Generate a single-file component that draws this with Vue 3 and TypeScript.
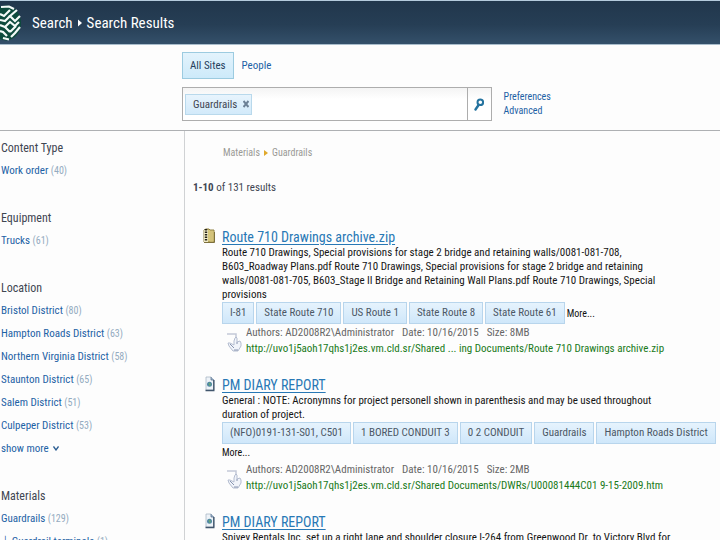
<script setup lang="ts">
import { ref } from 'vue'

interface Refiner {
  name: string
  count: number
}

interface RefinerGroup {
  title: string
  items: Refiner[]
  more?: boolean
}

interface Result {
  id: number
  kind: 'zip' | 'doc'
  title: string
  lines: string[]
  tags: string[]
  size: string
  url: string
}

const query = ref('')

const groups: RefinerGroup[] = [
  { title: 'Content Type', items: [{ name: 'Work order', count: 40 }] },
  { title: 'Equipment', items: [{ name: 'Trucks', count: 61 }] },
  {
    title: 'Location',
    items: [
      { name: 'Bristol District', count: 80 },
      { name: 'Hampton Roads District', count: 63 },
      { name: 'Northern Virginia District', count: 58 },
      { name: 'Staunton District', count: 65 },
      { name: 'Salem District', count: 51 },
      { name: 'Culpeper District', count: 53 },
    ],
    more: true,
  },
  {
    title: 'Materials',
    items: [
      { name: 'Guardrails', count: 129 },
      { name: '└ Guardrail terminals', count: 1 },
    ],
  },
]

const results: Result[] = [
  {
    id: 1,
    kind: 'zip',
    title: 'Route 710 Drawings archive.zip',
    lines: [
      'Route 710 Drawings, Special provisions for stage 2 bridge and retaining walls/0081-081-708,',
      'B603_Roadway Plans.pdf Route 710 Drawings, Special provisions for stage 2 bridge and retaining',
      'walls/0081-081-705, B603_Stage II Bridge and Retaining Wall Plans.pdf Route 710 Drawings, Special',
      'provisions',
    ],
    tags: ['I-81', 'State Route 710', 'US Route 1', 'State Route 8', 'State Route 61'],
    size: '8MB',
    url: 'http://uvo1j5aoh17qhs1j2es.vm.cld.sr/Shared ... ing Documents/Route 710 Drawings archive.zip',
  },
  {
    id: 2,
    kind: 'doc',
    title: 'PM DIARY REPORT',
    lines: [
      'General : NOTE: Acronymns for project personell shown in parenthesis and may be used throughout',
      'duration of project.',
    ],
    tags: ['(NFO)0191-131-S01, C501', '1 BORED CONDUIT 3', '0 2 CONDUIT', 'Guardrails', 'Hampton Roads District'],
    size: '2MB',
    url: 'http://uvo1j5aoh17qhs1j2es.vm.cld.sr/Shared Documents/DWRs/U00081444C01 9-15-2009.htm',
  },
  {
    id: 3,
    kind: 'doc',
    title: 'PM DIARY REPORT',
    lines: ['Spivey Rentals Inc. set up a right lane and shoulder closure I-264 from Greenwood Dr. to Victory Blvd for'],
    tags: [],
    size: '',
    url: '',
  },
]
</script>

<template>
  <div class="page">
    <header class="topbar">
      <svg class="logo" viewBox="0 0 22 36" aria-hidden="true">
        <ellipse cx="6" cy="18" rx="15" ry="17.500" fill="#0d4a3c" />
        <g fill="none" stroke="#f4faf8" stroke-width="2.200">
          <path d="M1 2L9 1.500L14 4M10 5L4 11L0 9M17 5L10 11L15 16L20 11" />
          <path d="M10 11L5 16L0 15M19 17L15 21L10 17L5 22L0 20" />
          <path d="M10 27L5 22M10 27L16 21M0 26L3 27L7 31M20 22L15 28L11 32M3 33L9 34.500" />
        </g>
      </svg>
      <nav class="trail">
        <a href="#search">Search</a>
        <svg class="trail-arrow" viewBox="0 0 5 9" aria-hidden="true"><path d="M0 0L5 4.500L0 9Z" fill="#fff" /></svg>
        <span>Search Results</span>
      </nav>
    </header>

    <section class="search">
      <nav class="scopes">
        <a class="scope active" href="#all">All Sites</a>
        <a class="scope" href="#people">People</a>
      </nav>
      <form class="search-row" @submit.prevent>
        <div class="box">
          <span class="chip">
            Guardrails
            <button class="remove" type="button" aria-label="Remove">
              <svg viewBox="0 0 6 8" aria-hidden="true"><path d="M0.500 1L5.500 7M5.500 1L0.500 7" stroke="#6d8196" stroke-width="2" /></svg>
            </button>
          </span>
          <input v-model="query" class="field" type="text" aria-label="Search" />
          <button class="go" type="submit" aria-label="Go">
            <svg viewBox="0 0 10 13" aria-hidden="true">
              <circle cx="6.300" cy="4.300" r="2.800" fill="none" stroke="#24739f" stroke-width="2" />
              <path d="M4.600 7L1.500 11.500" stroke="#24739f" stroke-width="2.400" stroke-linecap="round" />
            </svg>
          </button>
        </div>
        <div class="options">
          <a href="#preferences">Preferences</a>
          <a href="#advanced">Advanced</a>
        </div>
      </form>
    </section>

    <div class="body">
      <aside class="side">
        <section v-for="g in groups" :key="g.title" class="group">
          <h2>{{ g.title }}</h2>
          <ul>
            <li v-for="i in g.items" :key="i.name">
              <a href="#refine">{{ i.name }}</a> <span class="count">({{ i.count }})</span>
            </li>
          </ul>
          <button v-if="g.more" class="show-more" type="button">
            show more
            <svg viewBox="0 0 6 5" aria-hidden="true"><path d="M0.500 0.500L3 4L5.500 0.500" fill="none" stroke="#2d5f93" stroke-width="1.300" /></svg>
          </button>
        </section>
      </aside>

      <main class="main">
        <nav class="path">
          <span>Materials</span>
          <svg viewBox="0 0 4 6" aria-hidden="true"><path d="M0 0L4 3L0 6Z" fill="#e0a92c" /></svg>
          <span>Guardrails</span>
        </nav>
        <p class="total"><strong>1-10</strong> of 131 results</p>

        <article v-for="r in results" :key="r.id" class="result">
          <svg v-if="r.kind === 'zip'" class="file" viewBox="0 0 12 16" aria-hidden="true">
            <path d="M1 2L3 1H6L7 2H11V14H1Z" fill="#d9c87a" stroke="#8f8042" />
            <path d="M7 3H10.500V13.500H7Z" fill="#d3c27a" />
            <path d="M1 2H5V14H1Z" fill="#efe9c5" />
            <path d="M3 1V13" stroke="#26241a" stroke-width="2.400" stroke-dasharray="1.500 1" />
            <path d="M1 14.500H11.500V4" fill="none" stroke="#7d703d" />
          </svg>
          <svg v-else class="file" viewBox="0 0 12 16" aria-hidden="true">
            <path d="M3 1H8L11 4V14H3Z" fill="#eef3f8" stroke="#a9b7c5" stroke-width="0.800" />
            <path d="M8 1V4H11" fill="#9db3ca" stroke="#5f7792" stroke-width="0.800" />
            <circle cx="6.500" cy="8.200" r="2.500" fill="#4e87a4" />
            <path d="M5.500 7.500L7 6.500L8 9L6.500 10Z" fill="#69a577" />
            <path d="M2.500 14.500H10.800V4" fill="none" stroke="#41566d" stroke-width="1.400" />
          </svg>
          <div class="content">
            <h3><a href="#result">{{ r.title }}</a></h3>
            <p class="summary"><span v-for="l in r.lines" :key="l">{{ l }}</span></p>
            <div v-if="r.tags.length" class="tags">
              <button v-for="t in r.tags" :key="t" class="tag" type="button">{{ t }}</button>
              <a class="more" href="#more">More...</a>
            </div>
            <div v-if="r.url" class="details">
              <svg class="hand" viewBox="0 0 16 20" aria-hidden="true">
                <path d="M1 2H10V9" fill="none" stroke="#c3c9d8" stroke-width="1.500" />
                <path d="M9 6L10 5L11 6V10L14 9L15 11V14L12 19H7L3 14L2 11L4 11L8 13V9Z" fill="#f1f4fa" stroke="#b4bdd0" />
                <path d="M11 10V12M4 12L8 16M8 18H12" fill="none" stroke="#8794b0" />
              </svg>
              <div class="info">
                <p class="meta"><span>Authors: AD2008R2\Administrator</span><span>Date: 10/16/2015</span><span>Size: {{ r.size }}</span></p>
                <a class="url" href="#result">{{ r.url }}</a>
              </div>
            </div>
          </div>
        </article>
      </main>
    </div>
  </div>
</template>

<style>
body {
  overflow: hidden;
}
</style>

<style scoped>
.page {
  height: 100vh;
  overflow: hidden;
  display: flex;
  flex-direction: column;
  background: #fdfdfd;
  color: #3f4652;
  font: 11px/14px "Roboto Condensed", Lato, "Liberation Sans", sans-serif;
}
h2, h3, p, ul {
  margin: 0;
  padding: 0;
  font-weight: 400;
  list-style: none;
}
a {
  color: #1d62a5;
  text-decoration: none;
}
button, input {
  font: inherit;
  border: 0;
  padding: 0;
  background: none;
}
.topbar {
  box-sizing: border-box;
  flex: none;
  height: 45px;
  display: flex;
  align-items: center;
  gap: 10px;
  border-top: 1px solid #b4cbdc;
  border-bottom: 1px solid #a9bdcc;
  background: linear-gradient(#21374c, #263e55 55%, #34506a);
}
.logo {
  width: 22px;
  height: 36px;
}
.trail {
  display: flex;
  align-items: center;
  gap: 5px;
  color: #fff;
  font-size: 15px;
  line-height: 20px;
}
.trail a {
  color: #fff;
}
.trail-arrow {
  width: 4px;
  height: 8px;
}
.search {
  box-sizing: border-box;
  flex: none;
  height: 86px;
  padding: 7px 0 0 182px;
  border-bottom: 1px solid #aeb0b3;
}
.scopes {
  display: flex;
  align-items: center;
  gap: 8px;
}
.scope.active {
  padding: 5px 7px;
  border: 1px solid #9ccbe0;
  background: linear-gradient(#e3f3fc, #cdeafa);
  color: #26405c;
}
.scope {
  line-height: 15px;
}
.search-row {
  display: flex;
  align-items: center;
  gap: 12px;
  padding-top: 8px;
}
.box {
  box-sizing: border-box;
  display: flex;
  align-items: center;
  width: 43vw;
  height: 34px;
  border: 1px solid #adadad;
  background: linear-gradient(#f4f4f4, #fff 35%);
}
.chip {
  display: flex;
  align-items: center;
  gap: 6px;
  margin-left: 2px;
  padding: 2px 2px 2px 7px;
  border: 1px solid #b9d9ec;
  background: linear-gradient(#e8f4fd, #d2eafa);
  line-height: 15px;
}
.remove svg {
  display: block;
  width: 6px;
  height: 8px;
}
.field {
  flex: 1;
  min-width: 0;
  height: 22px;
  outline: 0;
}
.go {
  display: grid;
  place-items: center;
  width: 24px;
  height: 32px;
  border-left: 1px solid #adadad;
}
.go svg {
  width: 10px;
  height: 13px;
}
.options {
  display: grid;
  font-size: 10px;
}
.body {
  flex: 1;
  min-height: 0;
  display: flex;
}
.side {
  box-sizing: border-box;
  flex: none;
  width: 185px;
  padding: 8px 0 0 1px;
  border-right: 1px solid #d0d2d4;
}
.group {
  margin-bottom: 29px;
}
.group h2 {
  font-size: 12px;
  line-height: 18px;
}
.group li {
  height: 23px;
  line-height: 28px;
}
.count {
  color: #94abc0;
  font-size: 10px;
}
.show-more {
  display: flex;
  align-items: center;
  gap: 4px;
  height: 23px;
  padding-top: 4px;
  color: #1d62a5;
}
.show-more svg {
  width: 6px;
  height: 5px;
}
.main {
  flex: 1;
  min-width: 0;
  padding: 15px 0 0 8px;
}
.path {
  display: flex;
  align-items: center;
  gap: 4px;
  padding-left: 30px;
  color: #9a9a96;
  font-size: 10px;
}
.path svg {
  width: 4px;
  height: 6px;
}
.total {
  padding: 21px 0 33px;
}
.result {
  display: flex;
  gap: 6px;
  padding-left: 9px;
  margin-bottom: 19px;
}
.file {
  flex: none;
  width: 14px;
  height: 16px;
}
.content {
  flex: 1;
  min-width: 0;
}
h3 {
  font-size: 14px;
  line-height: 18px;
}
h3 a {
  color: #2878b5;
  text-decoration: underline;
  text-underline-offset: 2px;
}
.summary {
  color: #151515;
}
.summary span {
  display: block;
  white-space: nowrap;
}
.tags {
  display: flex;
  flex-wrap: wrap;
  align-items: center;
  column-gap: 2px;
}
.tag {
  padding: 2px 7px;
  border: 1px solid #b8d5ec;
  background: linear-gradient(#e6f3fd, #cfe7fa);
  color: #4c5866;
  line-height: 16px;
}
.more {
  color: #111;
  font-size: 10px;
  line-height: 17px;
}
.details {
  display: flex;
  gap: 4px;
  padding-left: 4px;
}
.hand {
  flex: none;
  width: 16px;
  height: 20px;
  margin-top: 8px;
}
.meta {
  display: flex;
  gap: 8px;
  color: #666;
  line-height: 17px;
}
.url {
  display: block;
  color: #1a7a1a;
  line-height: 16px;
  white-space: nowrap;
}
</style>
